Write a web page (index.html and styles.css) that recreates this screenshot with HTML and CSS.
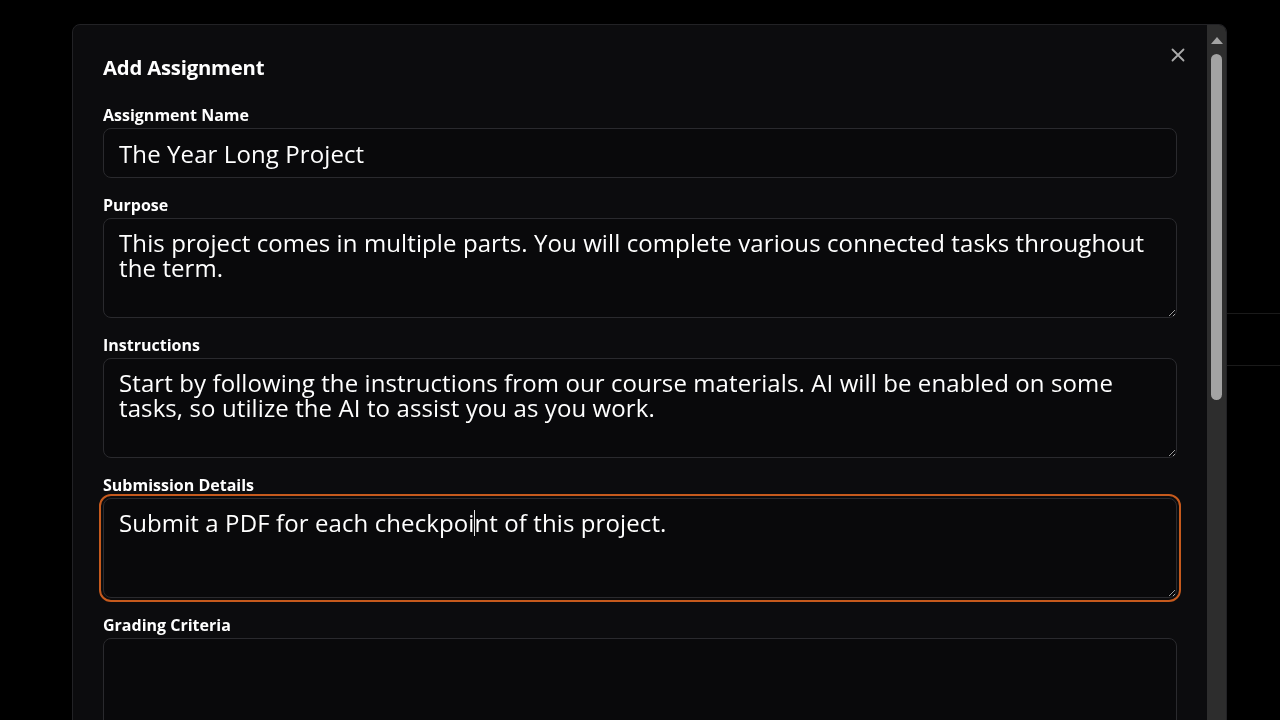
FILE: index.html
```html
<!DOCTYPE html>
<html lang="en">
<head>
<meta charset="utf-8">
<title>Add Assignment</title>
<link rel="stylesheet" href="styles.css">
</head>
<body>
<div class="page">
  <div class="page-row"></div>
</div>

<div class="modal" role="dialog" aria-labelledby="modal-title">
  <div class="modal-body">
    <h2 class="modal-title" id="modal-title">Add Assignment</h2>
    <form class="fields">
      <div class="field">
        <label class="field-label" for="f-name">Assignment Name</label>
        <input class="field-input" id="f-name" type="text" value="The Year Long Project">
      </div>
      <div class="field">
        <label class="field-label" for="f-purpose">Purpose</label>
        <textarea class="field-area" id="f-purpose">This project comes in multiple parts. You will complete various connected tasks throughout the term.</textarea>
      </div>
      <div class="field">
        <label class="field-label" for="f-instr">Instructions</label>
        <textarea class="field-area" id="f-instr">Start by following the instructions from our course materials. AI will be enabled on some tasks, so utilize the AI to assist you as you work.</textarea>
      </div>
      <div class="field field-active">
        <label class="field-label" for="f-sub">Submission Details</label>
        <textarea class="field-area is-focused" id="f-sub">Submit a PDF for each checkpoint of this project.</textarea>
        <span class="caret" aria-hidden="true"></span>
      </div>
      <div class="field">
        <label class="field-label" for="f-grade">Grading Criteria</label>
        <textarea class="field-area" id="f-grade"></textarea>
      </div>
    </form>
  </div>
  <div class="scrollbar" aria-hidden="true">
    <div class="scroll-arrow"></div>
    <div class="scroll-thumb"></div>
  </div>
  <button class="close-btn" type="button" aria-label="Close">
    <svg width="14" height="14" viewBox="0 0 14 14"><path d="M1.5 1.5 L12.5 12.5 M12.5 1.5 L1.5 12.5" stroke="#ababab" stroke-width="1.8" stroke-linecap="round" fill="none"/></svg>
  </button>
</div>
</body>
</html>
```

FILE: styles.css
```css
html, body {
  margin: 0;
  padding: 0;
  height: 100%;
  background: #000;
  overflow: hidden;
  color-scheme: dark;
}

body {
  font-family: "Open Sans", "Liberation Sans", sans-serif;
  color: #fff;
}

.page {
  padding-top: 313px;
}

.page-row {
  margin-left: 1200px;
  height: 51px;
  border-top: 1px solid #1a1a1a;
  border-bottom: 1px solid #1a1a1a;
}

.modal {
  position: fixed;
  top: 24px;
  left: 72px;
  width: 1155px;
  height: 760px;
  box-sizing: border-box;
  border: 1px solid #222225;
  border-radius: 8px;
  background: #0c0c0e;
  display: flex;
  overflow: hidden;
}

.modal-body {
  flex: 1;
  padding: 26px 30px 0 30px;
  min-width: 0;
}

.modal-title {
  margin: 0;
  font-size: 20.3px;
  line-height: 32px;
  font-weight: 700;
  letter-spacing: -0.2px;
}

.close-btn {
  position: absolute;
  top: 18px;
  right: 36px;
  width: 24px;
  height: 24px;
  padding: 0;
  border: 0;
  background: transparent;
  display: flex;
  align-items: center;
  justify-content: center;
  cursor: pointer;
}

.fields {
  margin-top: 21px;
  display: flex;
  flex-direction: column;
  gap: 16px;
}

.field {
  display: flex;
  flex-direction: column;
  gap: 2px;
}

.field-active {
  position: relative;
}

.caret {
  position: absolute;
  left: 371px;
  top: 36px;
  width: 1px;
  height: 26px;
  background: #e6e6e6;
}

.field-label {
  font-size: 16px;
  line-height: 22px;
  font-weight: 700;
  color: #fff;
}

.field-input,
.field-area {
  box-sizing: border-box;
  width: 100%;
  border: 1px solid #2a2a2e;
  border-radius: 8px;
  background: #09090b;
  color: #fff;
  font-family: "Open Sans", "Liberation Sans", sans-serif;
  font-size: 24px;
  letter-spacing: 0.1px;
  margin: 0;
}

.field-input {
  height: 50px;
  padding: 0 15px;
}

.field-area {
  display: block;
  height: 100px;
  padding: 11px 15px;
  line-height: 25px;
  resize: vertical;
}

.field-input:focus,
.field-area:focus {
  outline: none;
}

.field-area.is-focused {
  outline: 2.5px solid #c65a1d;
  outline-offset: 2px;
}

.scrollbar {
  width: 19px;
  flex: none;
  background: #2d2d2d;
  display: flex;
  flex-direction: column;
  align-items: center;
}

.scroll-arrow {
  margin-top: 12px;
  width: 0;
  height: 0;
  border-left: 6px solid transparent;
  border-right: 6px solid transparent;
  border-bottom: 7px solid #a3a3a3;
}

.scroll-thumb {
  margin-top: 10px;
  width: 11px;
  height: 346px;
  border-radius: 6px;
  background: #a3a3a3;
}
```
